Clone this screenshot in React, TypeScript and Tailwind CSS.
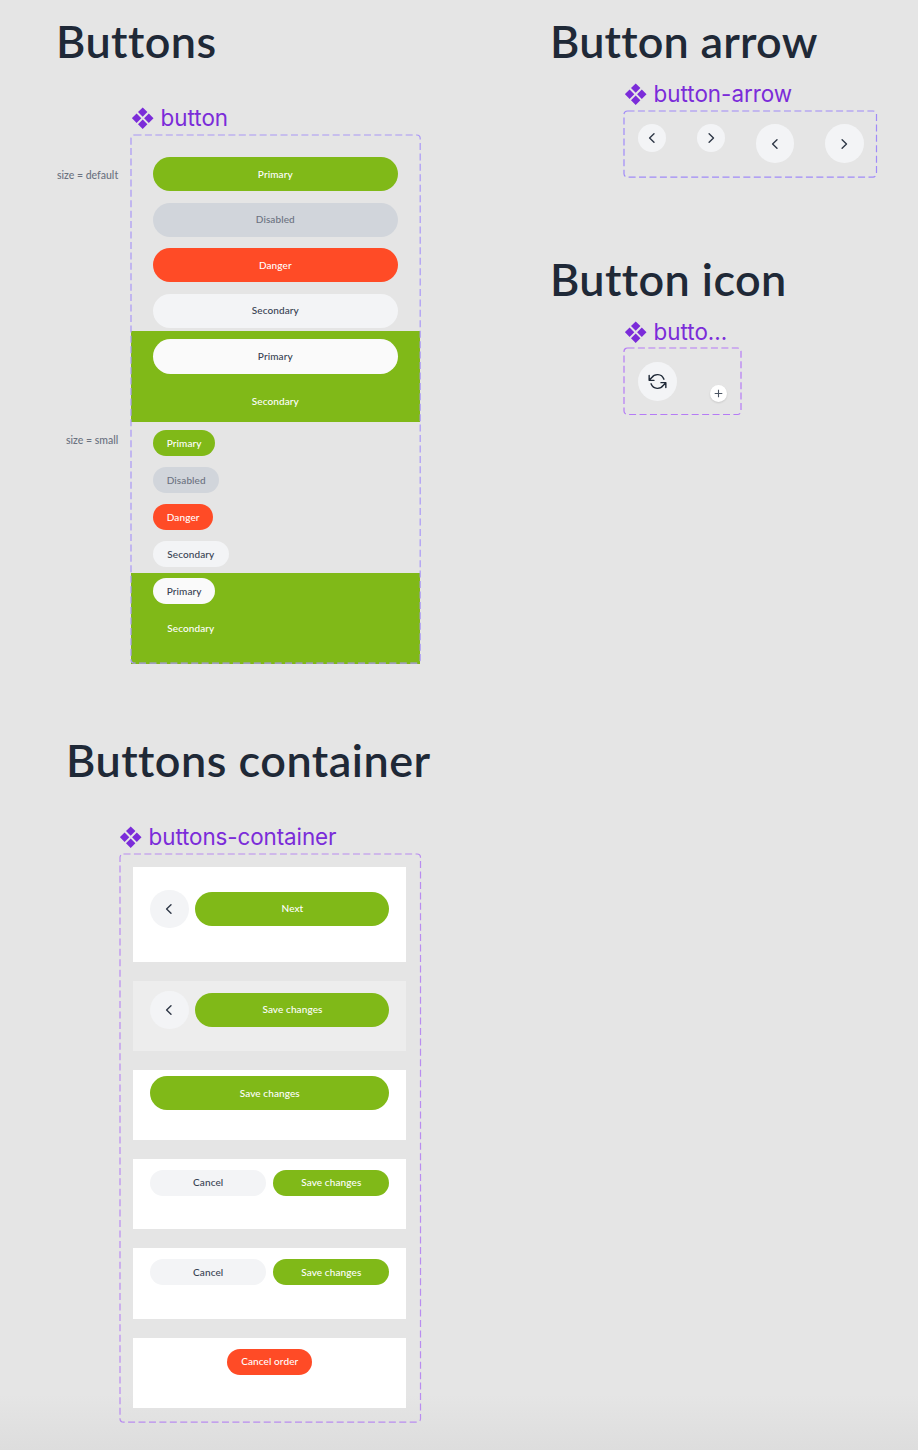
import type { ReactNode } from "react";

type Tone = "primary" | "disabled" | "danger" | "secondary" | "white" | "clear";

const tones: Record<Tone, string> = {
  primary: "bg-[#80b918] text-white",
  disabled: "bg-[#d1d5db] text-[#6b7280]",
  danger: "bg-[#ff4b26] text-white",
  secondary: "bg-[#f3f4f6] text-[#374151]",
  white: "bg-[#fafafa] text-[#374151]",
  clear: "text-white",
};

function Button({ tone, small, className = "", children }: { tone: Tone; small?: boolean; className?: string; children: ReactNode }) {
  return (
    <button
      className={`flex shrink-0 items-center justify-center rounded-full pb-[1px] text-[10px] leading-none font-medium tracking-[0.1px] whitespace-nowrap ${small ? "h-[26px]" : "h-[34.3px]"} ${tones[tone]} ${className}`}
    >
      {children}
    </button>
  );
}

function Chevron({ right }: { right?: boolean }) {
  return (
    <svg width="14" height="14" viewBox="0 0 14 14" fill="none" stroke="#2f3847" strokeWidth="1.4" strokeLinecap="round" strokeLinejoin="round">
      <path d={right ? "M5.1 2.7 9.5 7 5.1 11.3" : "M9 2.7 4.6 7 9 11.3"} />
    </svg>
  );
}

function Arrow({ right, large }: { right?: boolean; large?: boolean }) {
  return (
    <button className={`flex shrink-0 items-center justify-center rounded-full bg-[#f3f4f6] ${large ? "size-[38.6px]" : "size-7"}`}>
      <Chevron right={right} />
    </button>
  );
}

function Label({ children, className = "" }: { children: ReactNode; className?: string }) {
  return (
    <div className={`flex h-7 items-center gap-[7px] font-[Inter] text-[22.4px] leading-7 whitespace-nowrap text-[#7b2cd9] ${className}`}>
      <svg width="22" height="22" viewBox="0 0 22 22" fill="currentColor">
        <path d="M10.7 .4 15.4 5.1 10.7 9.8 6 5.1ZM16.8 6.5 21.5 11.2 16.8 15.9 12.1 11.2ZM10.7 12.6 15.4 17.3 10.7 22 6 17.3ZM4.6 6.5 9.3 11.2 4.6 15.9-.1 11.2Z" />
      </svg>
      <span>{children}</span>
    </div>
  );
}

function Frame({ children, className = "", stroke }: { children: ReactNode; className?: string; stroke: string }) {
  return (
    <div className={`relative ${className}`}>
      {children}
      <svg className="pointer-events-none absolute inset-0 size-full overflow-visible" fill="none">
        <rect width="100%" height="100%" rx="3.5" stroke={stroke} strokeWidth="1.2" strokeDasharray="7 3.43" />
      </svg>
    </div>
  );
}

function Title({ children, className = "" }: { children: ReactNode; className?: string }) {
  return <h1 className={`h-14 text-[45px] font-semibold whitespace-nowrap text-[#1f2937] ${className}`}>{children}</h1>;
}

export default function App() {
  return (
    <main className="flex h-[1450px] w-[918px] overflow-hidden bg-[linear-gradient(#e5e5e5_1395px,#dddddd_1450px)] font-[Lato,sans-serif] [font-variant-ligatures:none]">
      <div className="w-[547px] shrink-0">
        <Title className="mt-[14px] ml-[56px] leading-[55px] tracking-[0.45px]">Buttons</Title>
        <Label className="mt-[34px] ml-[131.6px]">button</Label>
        <div className="mt-[3.4px] flex">
          <div className="w-[130.7px] shrink-0 pr-[12.5px] text-right text-[10.5px] leading-[14px] font-medium text-[#6b7280]">
            <p className="mt-[33px]">size = default</p>
            <p className="mt-[251px]">size = small</p>
          </div>
          <Frame stroke="#a997f6" className="h-[528.2px] w-[289.2px]">
            <div className="flex h-[196.1px] flex-col gap-[11.2px] px-[22.3px] pt-[21.8px]">
              <Button tone="primary">Primary</Button>
              <Button tone="disabled">Disabled</Button>
              <Button tone="danger">Danger</Button>
              <Button tone="secondary">Secondary</Button>
            </div>
            <div className="flex h-[90.3px] flex-col gap-[11.2px] bg-[#80b918] px-[22.3px] pt-[7.8px]">
              <Button tone="white">Primary</Button>
              <Button tone="clear">Secondary</Button>
            </div>
            <div className="flex h-[151.6px] flex-col items-start gap-[11.1px] px-[22.3px] pt-[8.3px]">
              <Button small tone="primary" className="w-[62.4px]">Primary</Button>
              <Button small tone="disabled" className="w-[66.5px]">Disabled</Button>
              <Button small tone="danger" className="w-[60.4px]">Danger</Button>
              <Button small tone="secondary" className="w-[75.6px]">Secondary</Button>
            </div>
            <div className="flex h-[90.2px] flex-col items-start gap-[11.1px] bg-[#80b918] px-[22.3px] pt-[5px]">
              <Button small tone="white" className="w-[62.4px]">Primary</Button>
              <Button small tone="clear" className="w-[75.6px]">Secondary</Button>
            </div>
          </Frame>
        </div>

        <Title className="mt-[69.4px] ml-[66px] leading-[54px] tracking-[0.48px]">Buttons container</Title>
        <Label className="mt-[34px] ml-[119.6px] tracking-[-0.08px]">buttons-container</Label>
        <Frame stroke="#b98cf0" className="mt-[2.6px] ml-[119.5px] flex h-[568.2px] w-[300.5px] flex-col gap-[19.1px] px-[13.8px] pt-[13.8px]">
          <div className="flex h-[94.4px] items-start gap-[6.8px] bg-white px-[16.8px] pt-[22.2px]">
            <Arrow large />
            <Button tone="primary" className="mt-[2.1px] flex-1">Next</Button>
          </div>
          <div className="flex h-[70px] items-start gap-[6.8px] bg-[#ededed] px-[16.8px] pt-[9.8px]">
            <Arrow large />
            <Button tone="primary" className="mt-[2.1px] flex-1">Save changes</Button>
          </div>
          <div className="flex h-[70px] items-start bg-white px-[16.8px] pt-[6.2px]">
            <Button tone="primary" className="flex-1">Save changes</Button>
          </div>
          <div className="flex h-[70.2px] items-start gap-[6.8px] bg-white px-[16.8px] pt-[10.8px]">
            <Button small tone="secondary" className="flex-1">Cancel</Button>
            <Button small tone="primary" className="flex-1">Save changes</Button>
          </div>
          <div className="flex h-[70.3px] items-start gap-[6.8px] bg-white px-[16.8px] pt-[10.8px]">
            <Button small tone="secondary" className="flex-1">Cancel</Button>
            <Button small tone="primary" className="flex-1">Save changes</Button>
          </div>
          <div className="flex h-[70.3px] items-start justify-center bg-white pt-[10.8px]">
            <Button small tone="danger" className="w-[85px]">Cancel order</Button>
          </div>
        </Frame>
      </div>

      <div className="flex-1">
        <Title className="mt-[14px] ml-[3px] leading-[55px] tracking-[0.2px]">Button arrow</Title>
        <Label className="mt-[10px] ml-[77.6px]">button-arrow</Label>
        <Frame stroke="#a08af8" className="mt-[2.5px] ml-[77.4px] flex h-[66.2px] w-[252.5px] items-start gap-[30.8px] px-[13.6px] pt-[13.8px]">
          <Arrow />
          <Arrow right />
          <Arrow large />
          <Arrow large right />
        </Frame>
        <Title className="mt-[75.3px] ml-[3px] leading-[55px] tracking-[0.4px]">Button icon</Title>
        <Label className="mt-[10px] ml-[77.6px]">butto...</Label>
        <Frame stroke="#b57bf5" className="mt-[2.5px] ml-[77.4px] flex h-[66.5px] w-[117px] items-start justify-between pt-[13.8px] pr-[14.2px] pl-[13.6px]">
          <button className="flex size-[39px] items-center justify-center rounded-full bg-[#f3f4f6]">
            <svg width="19" height="19" viewBox="0 0 18 18" fill="none" stroke="#1f2937" strokeWidth="1.35" strokeLinecap="round" strokeLinejoin="round">
              <path d="M1.1 3.3v4.6h4.6M1.1 7.9 3.6 5.3C6 1.6 12.8 1 15.1 6.8M16.9 14.7v-4.6h-4.6M16.9 10.1 14.4 12.7C12 16.4 5.2 17 2.9 11.2" />
            </svg>
          </button>
          <button className="mt-[22.6px] flex size-[17px] items-center justify-center rounded-full bg-white shadow-[0_1px_2px_rgba(0,0,0,0.12)]">
            <svg width="9" height="9" viewBox="0 0 9 9" stroke="#4b5563" strokeWidth="1.1">
              <path d="M4.5.7v7.6M.7 4.5h7.6" />
            </svg>
          </button>
        </Frame>
      </div>
    </main>
  );
}
